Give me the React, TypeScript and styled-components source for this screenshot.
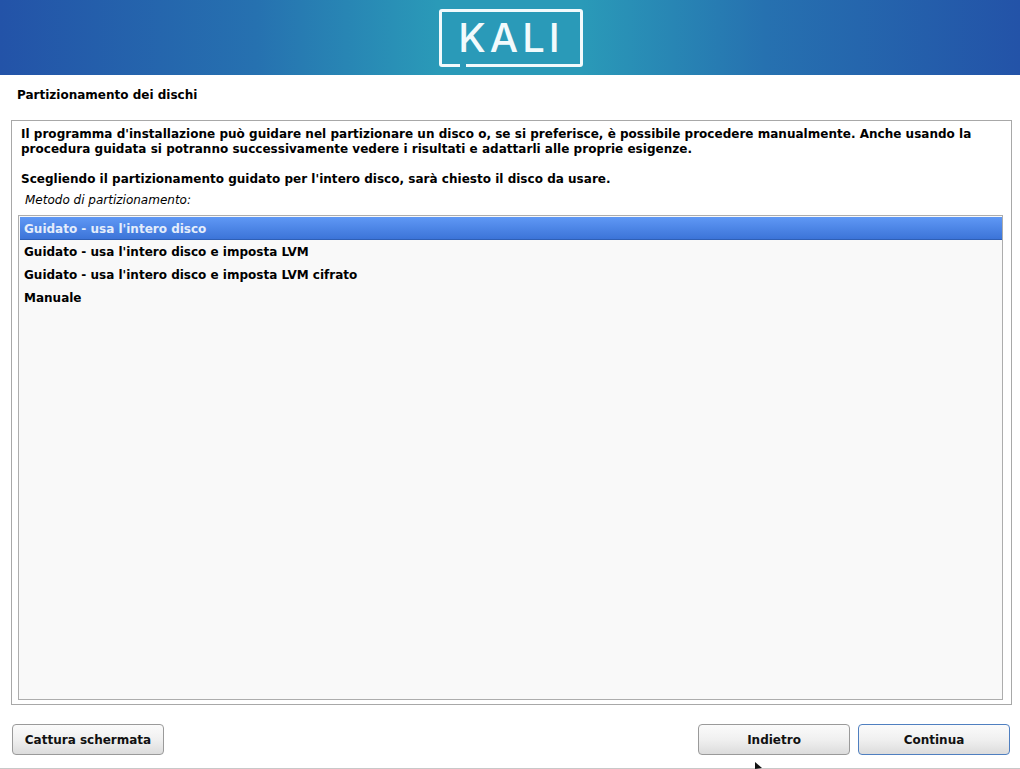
import React from 'react';
import styled, { createGlobalStyle } from 'styled-components';

const GlobalStyle = createGlobalStyle`
  html, body {
    margin: 0;
    padding: 0;
    background: #fff;
  }
  body {
    font-family: "DejaVu Sans", sans-serif;
    color: #000;
  }
`;

const Page = styled.div`
  display: flex;
  flex-direction: column;
  width: 1020px;
  height: 769px;
  overflow: hidden;
  position: relative;
  background: #fff;
`;
const Banner = styled.div`
  display: flex;
  justify-content: center;
  align-items: flex-start;
  flex: 0 0 75px;
  height: 75px;
  background: linear-gradient(90deg, #2353a8 0%, #2671b0 25%, #2a9ab8 43%, #2a9ab8 57%, #2671b0 75%, #2353a8 100%);
`;
const Logo = styled.div`
  position: relative;
  box-sizing: border-box;
  width: 144px;
  height: 58px;
  margin-top: 9px;
  margin-left: 2px;
  border: 3px solid #f2fafc;
  border-radius: 3px;
  display: flex;
  align-items: center;
  justify-content: center;
  color: #f2fafc;
  font-family: Inter, sans-serif;
  font-weight: 500;
  font-size: 40px;
  line-height: 52px;
  letter-spacing: 4px;
`;
const LogoGap = styled.span`
  position: absolute;
  left: 18px;
  bottom: -3px;
  width: 6px;
  height: 3px;
  background: #2a97b7;
`;
const Title = styled.h1`
  margin: 0;
  padding: 13px 17px 0;
  height: 32px;
  font-size: 12px;
  line-height: 14px;
  font-weight: bold;
`;
const Panel = styled.div`
  box-sizing: border-box;
  display: flex;
  flex-direction: column;
  width: 1001px;
  height: 585px;
  margin-left: 11px;
  padding: 6px 8px 4px 6px;
  border: 1px solid #a8a8a8;
`;
const Paragraph = styled.p`
  margin: 0 0 15px 3px;
  font-size: 12px;
  line-height: 15px;
  font-weight: bold;
  letter-spacing: 0.02px;
`;
const Caption = styled.div`
  margin: -9px 0 8px 7px;
  font-size: 12px;
  line-height: 14px;
  font-style: italic;
`;
const List = styled.ul`
  flex: 1;
  margin: 0;
  padding: 1px 0 1px 1px;
  list-style: none;
  background: #f9f9f9;
  border: 1px solid #adadad;
`;
const Row = styled.li<{ $selected?: boolean }>`
  box-sizing: border-box;
  height: 23px;
  padding-left: 4px;
  font-size: 12px;
  line-height: 25px;
  font-weight: bold;
  color: ${props => (props.$selected ? '#e4edfb' : '#000')};
  background: ${props => (props.$selected ? 'linear-gradient(180deg, #5f98f5 0%, #3c74d8 100%)' : 'transparent')};
  border-bottom: ${props => (props.$selected ? '1px solid #2f5fb5' : 'none')};
`;
const Footer = styled.div`
  display: flex;
  justify-content: space-between;
  padding: 19px 10px 0 12px;
`;
const Group = styled.div`
  display: flex;
  gap: 8px;
`;
const Button = styled.button<{ $focus?: boolean }>`
  box-sizing: border-box;
  width: 152px;
  height: 31px;
  padding: 0;
  font-family: "DejaVu Sans", sans-serif;
  font-size: 12px;
  font-weight: bold;
  color: #111;
  border-radius: 4px;
  border: 1px solid ${props => (props.$focus ? '#4f7fc0' : '#9a9a9a')};
  background: linear-gradient(180deg, #fbfbfb 0%, #f0f0f0 50%, #dcdcdc 100%);
`;
const BottomLine = styled.div`
  position: absolute;
  left: 0;
  right: 0;
  bottom: 0;
  height: 1px;
  background: #c8c8c8;
`;
const Cursor = styled.svg`
  position: absolute;
  left: 755px;
  top: 762px;
`;

const methods = [
  "Guidato - usa l'intero disco",
  "Guidato - usa l'intero disco e imposta LVM",
  "Guidato - usa l'intero disco e imposta LVM cifrato",
  'Manuale',
];

export default function App() {
  return (
    <Page>
      <GlobalStyle />
      <Banner>
        <Logo>
          KALI
          <LogoGap />
        </Logo>
      </Banner>
      <Title>Partizionamento dei dischi</Title>
      <Panel>
        <Paragraph>
          Il programma d'installazione può guidare nel partizionare un disco o, se si preferisce, è possibile procedere
          manualmente. Anche usando la procedura guidata si potranno successivamente vedere i risultati e adattarli alle
          proprie esigenze.
        </Paragraph>
        <Paragraph>Scegliendo il partizionamento guidato per l'intero disco, sarà chiesto il disco da usare.</Paragraph>
        <Caption>Metodo di partizionamento:</Caption>
        <List>
          {methods.map((m, i) => (
            <Row key={m} $selected={i === 0}>
              {m}
            </Row>
          ))}
        </List>
      </Panel>
      <Footer>
        <Button>Cattura schermata</Button>
        <Group>
          <Button>Indietro</Button>
          <Button $focus>Continua</Button>
        </Group>
      </Footer>
      <BottomLine />
      <Cursor width="8" height="7" viewBox="0 0 8 7">
        <path d="M0 0 L7 6 L0 7 Z" fill="#111" />
      </Cursor>
    </Page>
  );
}
